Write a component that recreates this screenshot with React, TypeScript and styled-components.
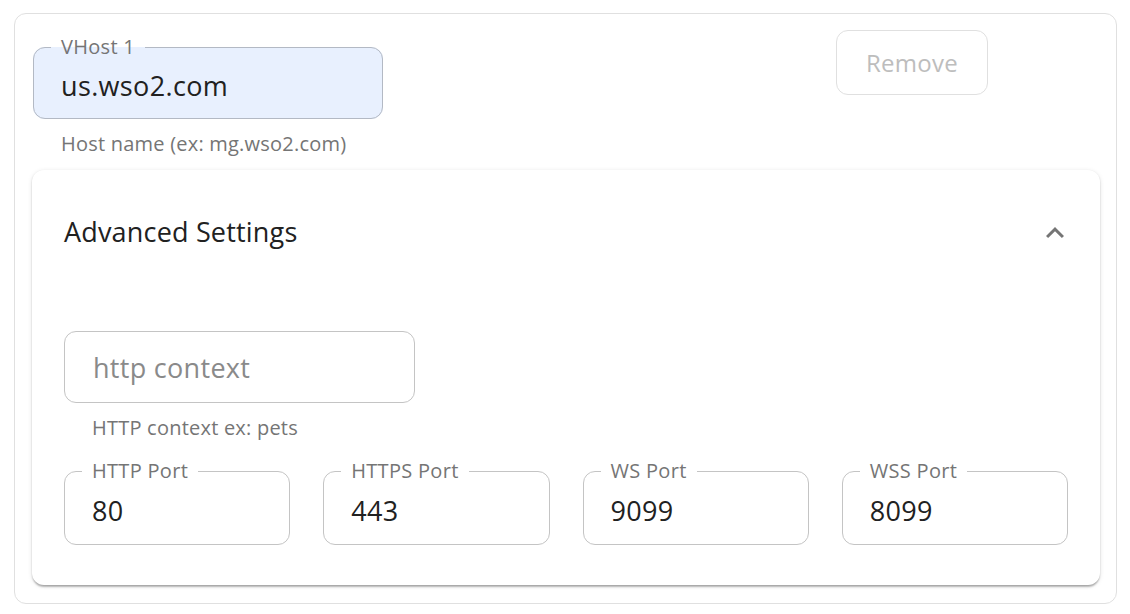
import React from "react";
import styled, { createGlobalStyle } from "styled-components";

const Global = createGlobalStyle`
  html, body { margin: 0; padding: 0; background: #ffffff; }
  body { font-family: "Open Sans", "Noto Sans", sans-serif; color: #212121; }
  * { box-sizing: border-box; }
`;

const Page = styled.div`
  padding: 13px 13px 10px 14px;
`;

const OuterCard = styled.section`
  border: 1px solid #e0e0e0;
  border-radius: 12px;
  padding: 16px 16px 18px 17px;
  display: flex;
  flex-direction: column;
`;

const TopRow = styled.div`
  display: grid;
  grid-template-columns: repeat(12, 1fr);
  align-items: start;
`;

const FieldCol = styled.div<{ $span: number; $width: number; $top: number }>`
  grid-column: span ${(p) => p.$span};
  width: ${(p) => p.$width}px;
  margin-top: ${(p) => p.$top}px;
  margin-left: 1px;
  display: flex;
  flex-direction: column;
`;

const Fieldset = styled.fieldset<{ $filled?: boolean }>`
  margin: 0;
  padding: 0 0 0 17px;
  border: 1px solid ${(p) => (p.$filled ? "#b3b9c4" : "#c4c4c4")};
  border-radius: 12px;
  background: ${(p) => (p.$filled ? "#e8f0fe" : "#ffffff")};
  min-width: 0;
`;

const Legend = styled.legend`
  padding: 0 10px;
  font-size: 20px;
  line-height: 20px;
  letter-spacing: 0.3px;
  color: #757575;
  white-space: nowrap;
`;

const Value = styled.div<{ $pt: number; $pb: number }>`
  padding: ${(p) => p.$pt}px 10px ${(p) => p.$pb}px;
  font-size: 27px;
  line-height: 36px;
  letter-spacing: 0.35px;
  color: #212121;
  white-space: nowrap;
`;

const PlainBox = styled.div`
  height: 72px;
  border: 1px solid #c4c4c4;
  border-radius: 12px;
  display: flex;
  align-items: center;
  padding: 0 28px;
  font-size: 27px;
  letter-spacing: 0.3px;
  color: #8a8a8a;
`;

const Helper = styled.div<{ $top: number }>`
  margin-top: ${(p) => p.$top}px;
  padding-left: 28px;
  font-size: 20px;
  line-height: 24px;
  letter-spacing: 0.22px;
  color: #757575;
  white-space: nowrap;
`;

const RemoveButton = styled.button`
  grid-column: 10 / span 3;
  justify-self: start;
  margin-left: 3px;
  width: 152px;
  height: 65px;
  border: 1.5px solid #e0e0e0;
  border-radius: 12px;
  background: #ffffff;
  color: #bdbdbd;
  font-family: "Open Sans", "Noto Sans", sans-serif;
  font-size: 24px;
  letter-spacing: 0.3px;
  cursor: default;
`;

const InnerCard = styled.div`
  margin-top: 14px;
  border-radius: 12px;
  background: #ffffff;
  box-shadow: 0 3px 2px -1px rgba(0, 0, 0, 0.22), 0 1px 2px rgba(0, 0, 0, 0.14),
    0 1px 5px rgba(0, 0, 0, 0.1);
  padding: 0 32px 40px;
`;

const Summary = styled.div`
  height: 122px;
  display: flex;
  align-items: center;
  justify-content: space-between;
`;

const Title = styled.div`
  font-size: 27px;
  letter-spacing: 0.18px;
  color: #212121;
`;

const Chevron = styled.svg`
  width: 36px;
  height: 36px;
  margin: 4px -5px 0 0;
  fill: #757575;
`;

const Details = styled.div`
  padding-top: 39px;
  display: flex;
  flex-direction: column;
`;

const ContextCol = styled.div`
  width: 351px;
  display: flex;
  flex-direction: column;
`;

const PortGrid = styled.div`
  margin-top: 21px;
  display: grid;
  grid-template-columns: repeat(4, 1fr);
  gap: 33px;
`;

type FieldProps = { label: string; value: string; filled?: boolean; pt: number; pb: number };

const OutlinedField = ({ label, value, filled, pt, pb }: FieldProps) => (
  <Fieldset $filled={filled}>
    <Legend>{label}</Legend>
    <Value $pt={pt} $pb={pb}>
      {value}
    </Value>
  </Fieldset>
);

const ports = [
  { label: "HTTP Port", value: "80" },
  { label: "HTTPS Port", value: "443" },
  { label: "WS Port", value: "9099" },
  { label: "WSS Port", value: "8099" },
];

export default function App() {
  return (
    <>
      <Global />
      <Page>
        <OuterCard>
          <TopRow>
            <FieldCol $span={4} $width={350} $top={7}>
              <OutlinedField label="VHost 1" value="us.wso2.com" filled pt={11} pb={14} />
              <Helper $top={13}>Host name (ex: mg.wso2.com)</Helper>
            </FieldCol>
            <RemoveButton disabled>Remove</RemoveButton>
          </TopRow>
          <InnerCard>
            <Summary>
              <Title>Advanced Settings</Title>
              <Chevron viewBox="0 0 24 24">
                <path d="M12 8l-6 6 1.41 1.41L12 10.83l4.59 4.58L18 14z" />
              </Chevron>
            </Summary>
            <Details>
              <ContextCol>
                <PlainBox>http context</PlainBox>
                <Helper $top={13}>HTTP context ex: pets</Helper>
              </ContextCol>
              <PortGrid>
                {ports.map((p) => (
                  <OutlinedField key={p.label} label={p.label} value={p.value} pt={12} pb={15} />
                ))}
              </PortGrid>
            </Details>
          </InnerCard>
        </OuterCard>
      </Page>
    </>
  );
}
